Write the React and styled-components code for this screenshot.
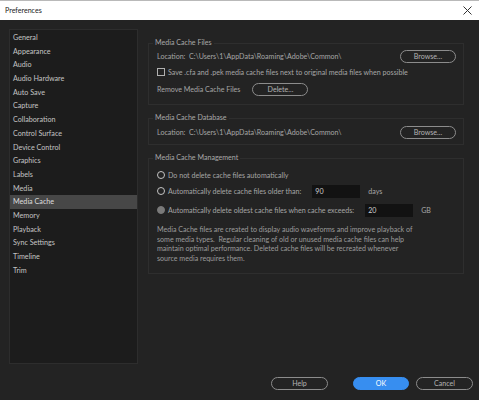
import { createGlobalStyle } from "styled-components";
import styled from "styled-components";

const GlobalStyle = createGlobalStyle`
  html, body {
    margin: 0;
    padding: 0;
    background: #232323;
  }
  body {
    font-family: Lato, "Open Sans", sans-serif;
  }
`;

const sections = [
  "General",
  "Appearance",
  "Audio",
  "Audio Hardware",
  "Auto Save",
  "Capture",
  "Collaboration",
  "Control Surface",
  "Device Control",
  "Graphics",
  "Labels",
  "Media",
  "Media Cache",
  "Memory",
  "Playback",
  "Sync Settings",
  "Timeline",
  "Trim",
];

function App() {
  const path = "C:\\Users\\1\\AppData\\Roaming\\Adobe\\Common\\";
  return (
    <Dialog>
      <GlobalStyle />
      <TitleBar>
        <Title>Preferences</Title>
        <Close>
          <svg width="9" height="9" viewBox="0 0 9 9">
            <path d="M0.5 0.5 L8.5 8.5 M8.5 0.5 L0.5 8.5" stroke="#333" strokeWidth="1" />
          </svg>
        </Close>
      </TitleBar>
      <Body>
        <Sidebar>
          {sections.map((s) => (
            <NavItem key={s} $active={s === "Media Cache"}>
              {s}
            </NavItem>
          ))}
        </Sidebar>
        <Content>
          <Group>
            <Legend>Media Cache Files</Legend>
            <Row $h={16}>
              <Label>Location:&nbsp;&nbsp;{path}</Label>
              <Spacer />
              <PillButton $w={56}>Browse...</PillButton>
            </Row>
            <Row $h={16}>
              <CheckBox />
              <Label>
                Save .cfa and .pek media cache files next to original media files when possible
              </Label>
            </Row>
            <Row $h={18}>
              <Label>Remove Media Cache Files</Label>
              <PillButton $w={56} $left={12}>
                Delete...
              </PillButton>
            </Row>
          </Group>
          <Group $bottom={3}>
            <Legend>Media Cache Database</Legend>
            <Row $h={18}>
              <Label>Location:&nbsp;&nbsp;{path}</Label>
              <Spacer />
              <PillButton $w={56}>Browse...</PillButton>
            </Row>
          </Group>
          <Group $top={4} $bottom={10}>
            <Legend>Media Cache Management</Legend>
            <Row $h={16}>
              <Radio />
              <Label>Do not delete cache files automatically</Label>
            </Row>
            <Row $h={16}>
              <Radio />
              <Label>Automatically delete cache files older than:</Label>
              <Field $left={11}>90</Field>
              <Unit>days</Unit>
            </Row>
            <Row $h={22}>
              <Radio $filled />
              <Label>Automatically delete oldest cache files when cache exceeds:</Label>
              <Field $left={11}>20</Field>
              <Unit>GB</Unit>
            </Row>
            <Description>
              Media Cache files are created to display audio waveforms and improve playback of
              <br />
              some media types.&nbsp; Regular cleaning of old or unused media cache files can help
              <br />
              maintain optimal performance. Deleted cache files will be recreated whenever
              <br />
              source media requires them.
            </Description>
          </Group>
        </Content>
      </Body>
      <Footer>
        <PillButton $w={57}>Help</PillButton>
        <FooterGap />
        <PillButton $w={56} $primary>
          OK
        </PillButton>
        <PillButton $w={57}>Cancel</PillButton>
      </Footer>
    </Dialog>
  );
}

const Dialog = styled.div`
  width: 479px;
  height: 400px;
  background: #232323;
  display: flex;
  flex-direction: column;
  overflow: hidden;
`;

const TitleBar = styled.div`
  height: 19px;
  background: #ffffff;
  border-top: 1px solid #b9b9b9;
  display: flex;
  align-items: center;
  padding: 0 6px 0 5px;
`;

const Title = styled.div`
  font-size: 7.1px;
  color: #222;
  flex: 1;
`;

const Close = styled.div`
  display: flex;
  align-items: center;
  margin-right: 1px;
`;

const Body = styled.div`
  display: flex;
  padding: 9px 0 0 9px;
  height: 334px;
`;

const Sidebar = styled.div`
  width: 127px;
  height: 332px;
  background: #1c1c1c;
  border: 1px solid #2d2d2d;
  padding-top: 1px;
  box-sizing: content-box;
`;

const NavItem = styled.div`
  height: 13.7px;
  line-height: 13.7px;
  padding-left: 3px;
  font-size: 7.2px;
  color: ${(p) => (p.$active ? "#dedede" : "#c4c4c4")};
  background: ${(p) => (p.$active ? "#474747" : "transparent")};
`;

const Content = styled.div`
  margin-left: 10px;
  width: 316px;
  display: flex;
  flex-direction: column;
  gap: 8px;
  padding-top: 9px;
`;

const Group = styled.fieldset`
  margin: 0;
  border: 1px solid #2e2e2e;
  padding: ${(p) => p.$top || 0}px 7px ${(p) => (p.$bottom ?? 6)}px 8px;
  min-width: 0;
`;

const Legend = styled.legend`
  font-size: 7.1px;
  color: #a9a9a9;
  padding: 0 2px;
  margin-left: -4px;
  line-height: 10px;
`;

const Row = styled.div`
  display: flex;
  align-items: center;
  height: ${(p) => p.$h}px;
`;

const Spacer = styled.div`
  flex: 1;
`;

const Label = styled.span`
  font-size: 7.1px;
  color: #a6a6a6;
  white-space: nowrap;
`;

const PillButton = styled.div`
  width: ${(p) => p.$w}px;
  height: 13px;
  box-sizing: border-box;
  margin-left: ${(p) => p.$left || 0}px;
  border-radius: 7px;
  border: 1px solid ${(p) => (p.$primary ? "#378ef0" : "#8c8c8c")};
  background: ${(p) => (p.$primary ? "#378ef0" : "transparent")};
  color: ${(p) => (p.$primary ? "#ffffff" : "#b3b3b3")};
  font-size: 7.1px;
  display: flex;
  align-items: center;
  justify-content: center;
  flex-shrink: 0;
`;

const CheckBox = styled.div`
  width: 8px;
  height: 8px;
  box-sizing: border-box;
  border: 1px solid #b0b0b0;
  margin-right: 3px;
  flex-shrink: 0;
`;

const Radio = styled.div`
  width: 8px;
  height: 8px;
  box-sizing: border-box;
  border-radius: 50%;
  border: 1px solid ${(p) => (p.$filled ? "#7a7a7a" : "#c4c4c4")};
  background: ${(p) => (p.$filled ? "#7a7a7a" : "transparent")};
  margin-right: 3px;
  flex-shrink: 0;
`;

const Field = styled.div`
  width: 48px;
  height: 13px;
  background: #121212;
  margin-left: ${(p) => p.$left}px;
  font-size: 7.1px;
  color: #d0d0d0;
  display: flex;
  align-items: center;
  padding-left: 3px;
  box-sizing: border-box;
  flex-shrink: 0;
`;

const Unit = styled.span`
  font-size: 7.1px;
  color: #a6a6a6;
  margin-left: 8px;
`;

const Description = styled.div`
  font-size: 7.1px;
  line-height: 9.6px;
  color: #9c9c9c;
  padding-top: 4px;
  white-space: nowrap;
`;

const Footer = styled.div`
  display: flex;
  align-items: center;
  padding: 14px 0 0 271px;
  gap: 7px;
`;

const FooterGap = styled.div`
  width: 11px;
`;

export default App;
